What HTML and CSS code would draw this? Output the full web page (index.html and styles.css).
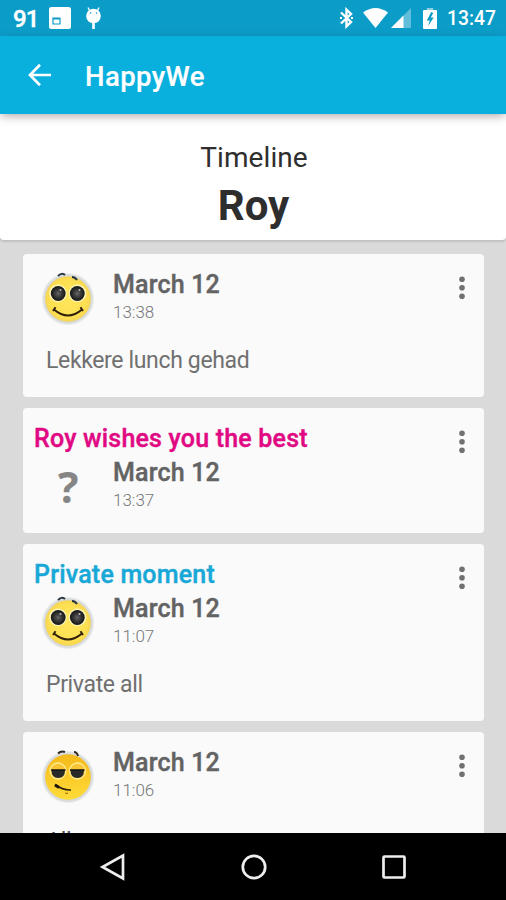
FILE: index.html
```html
<!DOCTYPE html>
<html lang="en">
<head>
<meta charset="utf-8">
<title>HappyWe</title>
<link rel="stylesheet" href="styles.css">
</head>
<body>
<svg class="defs" width="0" height="0">
  <defs>
    <radialGradient id="skin"><stop offset="0" stop-color="#ffe65c"/><stop offset=".8" stop-color="#fee052"/><stop offset="1" stop-color="#f6d554"/></radialGradient>
    <linearGradient id="gold" x2="0" y2="1"><stop offset="0" stop-color="#f5b91b"/><stop offset="1" stop-color="#ffdc38"/></linearGradient>
    <radialGradient id="pupil"><stop offset="0" stop-color="#666"/><stop offset=".45" stop-color="#3c3c3c"/><stop offset="1" stop-color="#151515"/></radialGradient>
    <radialGradient id="halo"><stop offset=".84" stop-color="#d2d4d4"/><stop offset=".93" stop-color="#dfe0e0"/><stop offset="1" stop-color="#dfe0e0" stop-opacity="0"/></radialGradient>
    <symbol id="happy" viewBox="0 0 54 56">
      <circle cx="27" cy="29" r="26.500" fill="url(#halo)"/>
      <circle cx="27" cy="29" r="22.800" fill="url(#skin)"/>
      <path d="M17 6q4-4 7-1M31 7q3 0 5 3" fill="none" stroke="#283642" stroke-width="2"/>
      <circle cx="17" cy="23.300" r="8.800" fill="#fff8bd"/><circle cx="36.500" cy="23.300" r="8.800" fill="#fff8bd"/>
      <circle cx="17.200" cy="23.500" r="7.400" fill="url(#pupil)"/><circle cx="36.300" cy="23.500" r="7.400" fill="url(#pupil)"/>
      <circle cx="19.500" cy="20" r="1" fill="#bbb"/><circle cx="38.500" cy="20" r="1" fill="#bbb"/>
      <path d="M13 39.500q14 12 28 0M12 41l2.500-3.700M39.500 37.300l2.500 3.700" fill="none" stroke="#30200c" stroke-width="2"/>
    </symbol>
    <symbol id="smug" viewBox="0 0 54 56">
      <circle cx="27" cy="29" r="26.500" fill="url(#halo)"/>
      <circle cx="27" cy="29" r="22.800" fill="url(#gold)"/>
      <path d="M17 5.500q3-3 7-1.500M33 4q3 0 4 4" fill="none" stroke="#302c24" stroke-width="2"/>
      <circle cx="17" cy="23" r="8" fill="#f8c634" stroke="#ffec95" stroke-width="1.300"/><circle cx="36.500" cy="23" r="8" fill="#f8c634" stroke="#ffec95" stroke-width="1.300"/>
      <path d="M10.500 22h13.500q0 8-6.700 8t-6.800-8M29.500 22h13.500q0 8-6.700 8t-6.800-8" fill="#292929"/>
      <path d="M10 22h14.500M29 22h14.500" stroke="#151515" stroke-width="1.600"/>
      <path d="M14 36.500q8 6 16 5.500" fill="none" stroke="#30200c" stroke-width="1.600"/><path d="M14 37l4 2.500" stroke="#20150a" stroke-width="3"/>
      <path d="M24 45q2 1 3 0" fill="none" stroke="#8b5e09" stroke-width="1"/>
    </symbol>
    <symbol id="dots" viewBox="0 0 10 26"><g fill="#717171"><circle cx="5" cy="4.300" r="2.800"/><circle cx="5" cy="12.800" r="2.800"/><circle cx="5" cy="21.300" r="2.800"/></g></symbol>
  </defs>
</svg>
<div class="screen">
  <div class="status">
    <span class="count">91</span>
    <svg class="note" width="22" height="22" viewBox="0 0 22 22"><rect width="22" height="22" rx="2.500" fill="#fff"/><path d="M4 11h7v6H4zM4 12h7" fill="none" stroke="#0b9cc8" stroke-width="1.200"/></svg>
    <svg class="droid" width="17" height="23" viewBox="0 0 17 23"><path d="M3 .5l2 4M14 .5l-2 4" stroke="#fff" stroke-width="1.300"/><circle cx="8.500" cy="9" r="7.300" fill="#fff"/><path d="M7.200 15h2.600v7H7.200z" fill="#fff"/><circle cx="5.500" cy="6" r=".8" fill="#0b9cc8"/><circle cx="11.500" cy="6" r=".8" fill="#0b9cc8"/></svg>
    <svg class="bt" width="15" height="22" viewBox="0 0 15 22"><path d="M2 5.500l10 9.500-4.500 4.300V2.700L12 7 2 16.500" fill="none" stroke="#fff" stroke-width="2.400"/><path d="M1 11h2M12 11h2" stroke="#fff" stroke-width="2"/></svg>
    <svg class="wifi" width="25" height="20" viewBox="0 0 26 20" preserveAspectRatio="none"><path d="M0 4.500Q13-4.500 26 4.500L13 20z" fill="#fff"/></svg>
    <svg class="signal" width="20" height="20" viewBox="0 0 20 20"><path d="M20 0v20H0z" fill="#fff" opacity=".35"/><path d="M12.500 7.500V20H0z" fill="#fff"/></svg>
    <svg class="battery" width="14" height="21" viewBox="0 0 15 21" preserveAspectRatio="none"><path d="M4 0h7v2H4z" fill="#8ccfe4"/><rect y="2" width="15" height="19" rx="1" fill="#fff"/><path d="M8.800 4L4 12.500h3.200L5.500 18l6-8.500H8.400L11 5z" fill="#0b9cc8"/></svg>
    <span class="clock">13:47</span>
  </div>
  <div class="appbar">
    <svg width="24" height="24" viewBox="0 0 24 24"><path d="M23 12H2.500M12 1.800L2 12l10 10.200" fill="none" stroke="#fff" stroke-width="2.700"/></svg>
    <span class="app">HappyWe</span>
  </div>
  <div class="header"><div class="kind">Timeline</div><div class="name">Roy</div></div>
  <div class="list">
    <div class="card">
      <div class="row"><svg class="face"><use href="#happy"/></svg><div><div class="date">March 12</div><div class="time">13:38</div></div></div>
      <div class="message">Lekkere lunch gehad</div>
      <svg class="more"><use href="#dots"/></svg>
    </div>
    <div class="card">
      <div class="title wish">Roy wishes you the best</div>
      <div class="row"><div class="question">?</div><div><div class="date">March 12</div><div class="time">13:37</div></div></div>
      <svg class="more"><use href="#dots"/></svg>
    </div>
    <div class="card">
      <div class="title private">Private moment</div>
      <div class="row"><svg class="face"><use href="#happy"/></svg><div><div class="date">March 12</div><div class="time">11:07</div></div></div>
      <div class="message">Private all</div>
      <svg class="more"><use href="#dots"/></svg>
    </div>
    <div class="card">
      <div class="row"><svg class="face"><use href="#smug"/></svg><div><div class="date">March 12</div><div class="time">11:06</div></div></div>
      <div class="message last">All</div>
      <svg class="more"><use href="#dots"/></svg>
    </div>
  </div>
  <div class="nav">
    <svg width="28" height="28" viewBox="0 0 28 28"><path d="M24 2.500v23L3.500 14z"/></svg>
    <svg width="28" height="28" viewBox="0 0 28 28"><circle cx="14" cy="14" r="11.200"/></svg>
    <svg width="28" height="28" viewBox="0 0 28 28"><rect x="3.500" y="3.500" width="21" height="21" rx="1"/></svg>
  </div>
</div>
</body>
</html>
```
FILE: styles.css
```css
* { box-sizing: border-box; }
body { margin: 0; font-family: Roboto, sans-serif; overflow: hidden; }
svg { display: block; flex: none; }
.defs { position: absolute; }
.screen { width: 506px; height: 900px; display: flex; flex-direction: column; background: #dadada; overflow: hidden; }
.status { height: 36px; flex: none; display: flex; align-items: center; padding: 0 11px 0 13px; background: #0b9cc8; color: #fff; }
.count { width: 36px; font-size: 24px; font-weight: 500; line-height: 36px; letter-spacing: -.8px; -webkit-text-stroke: .4px #fff; padding-top: 1px; }
.droid { margin-left: 14px; }
.bt { margin-left: auto; }
.wifi { margin-left: 9px; }
.signal { margin-left: 3px; }
.battery { margin: 0 10px 0 12px; }
.clock { width: 48px; font-size: 19.300px; font-weight: 500; line-height: 38px; white-space: nowrap; padding-top: 2px; }
.appbar { position: relative; height: 78px; flex: none; display: flex; align-items: center; padding-left: 28px; background: #09afdd; color: #fff; box-shadow: 0 3px 9px -1px rgba(60, 40, 35, .4); }
.app { margin-left: 33px; font-size: 27.500px; font-weight: 500; line-height: 32px; letter-spacing: .4px; padding-top: 3px; -webkit-text-stroke: .2px #fff; }
.header { height: 126px; flex: none; padding-top: 26px; text-align: center; background: #fff; color: #2e2e2e; border-radius: 0 0 4px 4px; box-shadow: 0 2px 2px rgba(0, 0, 0, .12); }
.kind { font-size: 28px; line-height: 36px; padding-left: 2px; letter-spacing: .1px; }
.name { font-size: 42px; line-height: 50px; font-weight: 700; padding: 5px 0 0 1px; }
.list { flex: 1; min-height: 0; overflow: hidden; display: flex; flex-direction: column; gap: 11.500px; padding: 14px 22px 0 23px; }
.card { position: relative; flex: none; padding: 12.500px 11px 23px; background: #fafafa; border-radius: 4px; }
.title { height: 34px; font-size: 25px; line-height: 36px; font-weight: 500; letter-spacing: .2px; white-space: nowrap; -webkit-text-stroke: .4px currentColor; }
.wish { color: #e10883; }
.private { color: #18a8d7; }
.row { display: grid; grid-template-columns: 79px 1fr; height: 55px; }
.face { width: 54px; height: 56px; margin: 3px 0 0 7px; }
.date { font-size: 25px; line-height: 35px; font-weight: 500; letter-spacing: .18px; color: #636363; -webkit-text-stroke: .4px currentColor; }
.time { font-size: 17px; line-height: 21px; font-weight: 300; color: #777; }
.question { padding: 7px 0 0 24px; font: 700 43px/50px "Open Sans", sans-serif; color: #858585; }
.message { height: 52px; padding: 25px 0 0 12px; font-size: 23px; line-height: 28px; letter-spacing: -.35px; color: #707070; white-space: nowrap; }
.last { padding-top: 28px; color: #505050; }
.more { position: absolute; right: 17px; top: 21px; width: 10px; height: 26px; }
.nav { height: 67px; flex: none; display: flex; gap: 112.500px; padding: 20px 0 0 99px; background: #000; }
.nav svg { fill: none; stroke: #eee; stroke-width: 2.700; }
```
